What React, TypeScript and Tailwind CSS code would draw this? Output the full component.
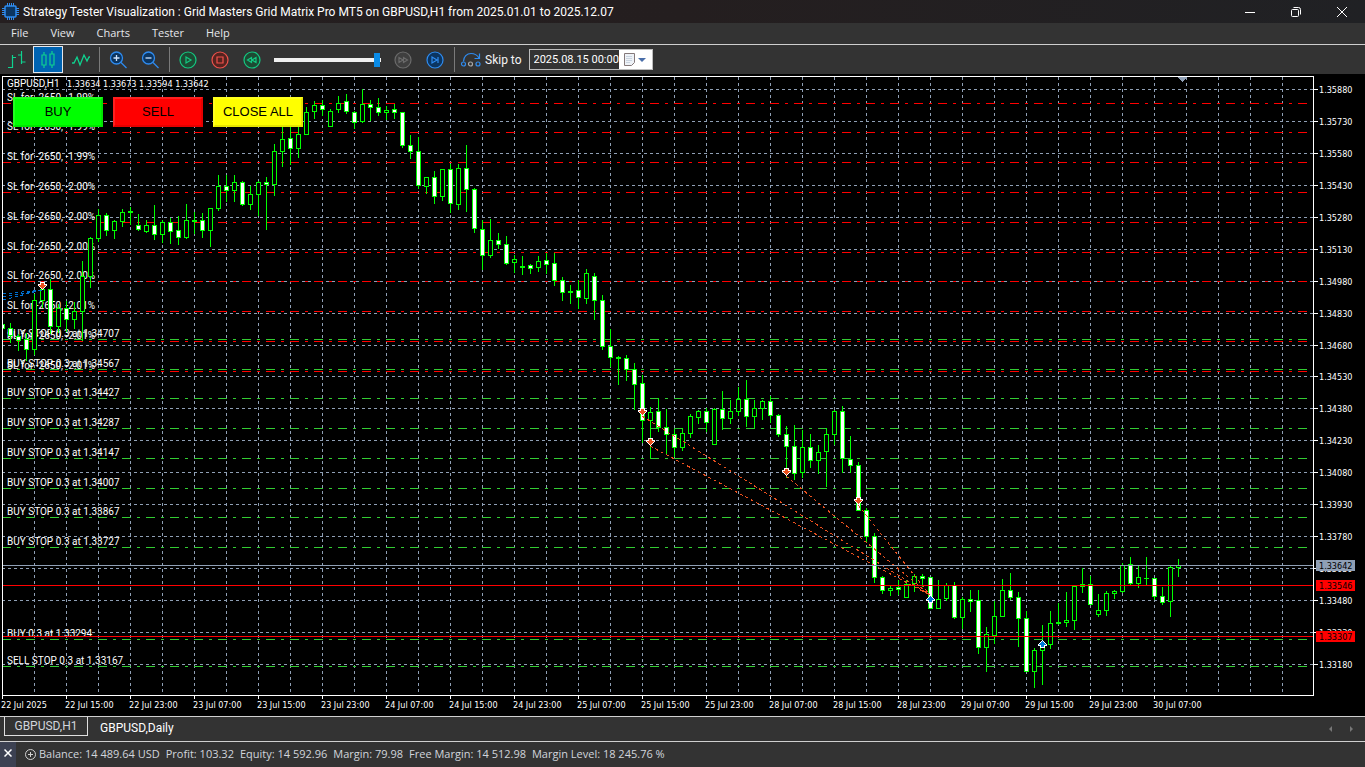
import type { ReactNode } from "react";

// [high, body top, body bottom, low, filled]
type Candle = [number, number, number, number, number];

const candles: Candle[] = [
  [324, 324, 329, 329, 1], [323, 328, 336, 343, 1], [334, 336, 341, 351, 1], [333, 339, 350, 361, 1],
  [294, 300, 350, 355, 0], [287, 289, 301, 308, 0], [279, 289, 327, 334, 1], [304, 308, 327, 333, 0],
  [301, 308, 320, 332, 1], [302, 311, 320, 329, 0], [261, 276, 312, 341, 0], [237, 238, 277, 288, 0],
  [209, 215, 239, 242, 0], [213, 215, 231, 236, 1], [220, 221, 231, 239, 0], [209, 212, 222, 227, 0],
  [207, 211, 213, 225, 0], [214, 225, 230, 231, 1], [220, 225, 232, 233, 0], [205, 225, 235, 240, 1],
  [220, 222, 235, 243, 0], [218, 222, 232, 244, 1], [216, 230, 238, 245, 1], [204, 220, 238, 239, 0],
  [212, 220, 222, 234, 0], [213, 220, 231, 238, 1], [208, 208, 231, 247, 0], [175, 186, 209, 211, 0],
  [175, 186, 191, 202, 1], [175, 182, 191, 202, 0], [181, 182, 205, 206, 1], [186, 194, 205, 210, 0],
  [181, 182, 195, 216, 0], [177, 182, 185, 230, 1], [144, 151, 185, 196, 0], [126, 139, 152, 167, 0],
  [124, 138, 149, 165, 1], [126, 134, 149, 158, 0], [107, 112, 135, 135, 0], [101, 105, 112, 119, 0],
  [100, 105, 110, 116, 1], [109, 111, 127, 127, 0], [96, 103, 110, 113, 0], [94, 101, 112, 114, 1],
  [111, 112, 123, 129, 1], [89, 104, 122, 123, 0], [100, 104, 108, 121, 1], [98, 107, 113, 116, 1],
  [106, 110, 113, 120, 0], [104, 109, 113, 119, 1], [112, 112, 146, 148, 1], [135, 145, 152, 159, 1],
  [137, 151, 186, 189, 1], [177, 177, 187, 194, 0], [171, 177, 197, 204, 1], [169, 169, 197, 201, 0],
  [164, 169, 204, 213, 1], [164, 168, 205, 210, 0], [145, 168, 190, 212, 1], [188, 189, 229, 233, 1],
  [220, 229, 256, 270, 1], [219, 240, 256, 258, 0], [233, 240, 245, 249, 1], [236, 244, 264, 265, 1],
  [255, 259, 263, 273, 0], [256, 266, 268, 275, 0], [264, 265, 269, 274, 1], [256, 261, 268, 272, 0],
  [253, 260, 265, 274, 1], [253, 263, 281, 286, 1], [277, 280, 293, 301, 1], [285, 291, 293, 304, 0],
  [280, 290, 298, 309, 1], [269, 273, 299, 304, 0], [273, 276, 301, 320, 1], [295, 300, 347, 350, 1],
  [329, 346, 358, 367, 1], [356, 357, 359, 385, 0], [355, 358, 370, 381, 1], [363, 369, 385, 410, 1],
  [375, 383, 421, 443, 1], [407, 412, 421, 459, 0], [398, 411, 428, 432, 1], [409, 427, 435, 455, 1],
  [429, 434, 448, 457, 1], [428, 433, 448, 451, 0], [414, 416, 434, 438, 0], [410, 411, 418, 424, 0],
  [408, 411, 423, 432, 1], [408, 409, 445, 445, 0], [391, 409, 419, 430, 1], [400, 411, 419, 424, 0],
  [387, 399, 412, 416, 0], [380, 399, 417, 427, 1], [400, 408, 417, 428, 0], [400, 401, 409, 420, 0],
  [396, 401, 416, 423, 1], [414, 415, 435, 437, 1], [426, 434, 447, 478, 1], [425, 446, 474, 480, 1],
  [430, 447, 473, 478, 0], [434, 447, 461, 468, 1], [445, 452, 461, 474, 0], [428, 434, 452, 487, 0],
  [410, 411, 435, 445, 0], [406, 411, 459, 473, 1], [436, 459, 466, 473, 1], [462, 465, 511, 511, 1],
  [508, 510, 537, 542, 1], [533, 536, 578, 583, 1], [576, 577, 591, 594, 1], [586, 588, 591, 596, 0],
  [580, 587, 590, 595, 1], [580, 584, 598, 598, 0], [574, 576, 584, 592, 0], [574, 576, 579, 587, 1],
  [577, 577, 609, 609, 1], [580, 599, 609, 609, 0], [583, 585, 599, 601, 0], [582, 585, 618, 619, 1],
  [597, 599, 618, 629, 0], [590, 599, 602, 612, 1], [590, 600, 648, 654, 1], [627, 634, 648, 672, 0],
  [601, 616, 636, 644, 0], [579, 590, 617, 617, 0], [573, 590, 598, 600, 1], [592, 597, 619, 647, 1],
  [611, 618, 672, 672, 1], [648, 650, 672, 688, 0], [625, 645, 651, 685, 0], [611, 623, 645, 649, 0],
  [603, 622, 624, 625, 0], [592, 620, 623, 627, 0], [585, 586, 621, 630, 0], [568, 584, 587, 593, 0],
  [576, 584, 605, 605, 1], [594, 610, 615, 617, 0], [591, 593, 611, 616, 0], [590, 591, 594, 599, 0],
  [563, 565, 592, 593, 0], [557, 564, 584, 585, 1], [566, 577, 584, 588, 0], [557, 578, 579, 585, 0],
  [578, 578, 597, 600, 1], [587, 596, 603, 605, 1], [565, 567, 602, 617, 0], [559, 565, 568, 577, 0],
];

const priceTicks = [
  89, 121, 153, 185, 217, 249, 281, 313, 345, 376, 408, 440, 472, 504, 536, 568, 600, 632, 664,
].map((y, i) => ({ y, label: ((135880 - i * 150) / 100000).toFixed(5) }));

const timeLabels = [
  "22 Jul 2025", "22 Jul 15:00", "22 Jul 23:00", "23 Jul 07:00", "23 Jul 15:00", "23 Jul 23:00",
  "24 Jul 07:00", "24 Jul 15:00", "24 Jul 23:00", "25 Jul 07:00", "25 Jul 15:00", "25 Jul 23:00",
  "28 Jul 07:00", "28 Jul 15:00", "28 Jul 23:00", "29 Jul 07:00", "29 Jul 15:00", "29 Jul 23:00",
  "30 Jul 07:00",
];

const stopLosses = [
  { y: 103, text: "SL for -2650, -1.99%" },
  { y: 132, text: "SL for -2650, -1.99%" },
  { y: 162, text: "SL for -2650, -1.99%" },
  { y: 192, text: "SL for -2650, -2.00%" },
  { y: 222, text: "SL for -2650, -2.00%" },
  { y: 252, text: "SL for -2650, -2.00%" },
  { y: 281, text: "SL for -2650, -2.00%" },
  { y: 311, text: "SL for -2650, -2.01%" },
  { y: 341, text: "SL for -2650, -2.01%" },
  { y: 371, text: "SL for -2650, -2.01%" },
];

const orders = [
  { y: 339, text: "BUY STOP 0.3 at 1.34707" },
  { y: 369, text: "BUY STOP 0.3 at 1.34567" },
  { y: 398, text: "BUY STOP 0.3 at 1.34427" },
  { y: 428, text: "BUY STOP 0.3 at 1.34287" },
  { y: 458, text: "BUY STOP 0.3 at 1.34147" },
  { y: 488, text: "BUY STOP 0.3 at 1.34007" },
  { y: 517, text: "BUY STOP 0.3 at 1.33867" },
  { y: 547, text: "BUY STOP 0.3 at 1.33727" },
  { y: 639, text: "BUY 0.3 at 1.33294" },
  { y: 666, text: "SELL STOP 0.3 at 1.33167" },
];

const priceTags = [
  { y: 565, label: "1.33642", color: "#8f9fb5" },
  { y: 585, label: "1.33546", color: "#ff0000" },
  { y: 636, label: "1.33307", color: "#ff0000" },
];

const sells = [[42, 286], [642, 412], [650, 442], [786, 472], [858, 501]];
const buys = [[930, 599], [1042, 644]];
const trades = [[642, 416], [650, 446], [786, 476], [858, 505]];

const Chart = () => (
  <svg
    viewBox="0 74 1365 642"
    className="block w-full h-auto bg-black font-['DejaVu_Sans_Condensed','DejaVu_Sans',sans-serif] text-[9px]"
    role="img"
    aria-label="GBPUSD,H1"
  >
    <g shapeRendering="crispEdges">
      {/* grid */}
      <g stroke="#8f9fb5" strokeDasharray="3 3">
        {Array.from({ length: 40 }, (_, i) => (
          <line key={i} x1={34.5 + i * 32} x2={34.5 + i * 32} y1="77" y2="695" />
        ))}
        {priceTicks.map(({ y }) => (
          <line key={y} x1="2" x2="1313" y1={y + 0.5} y2={y + 0.5} />
        ))}
      </g>
      <g strokeDasharray="9 6 3 6">
        {stopLosses.map(({ y }) => (
          <line key={y} x1="2" x2="1313" y1={y + 0.5} y2={y + 0.5} stroke="#ff0000" />
        ))}
        {orders.map(({ y }) => (
          <line key={y} x1="2" x2="1313" y1={y + 0.5} y2={y + 0.5} stroke="#32cd32" />
        ))}
      </g>
    </g>

    <text x="67" y="87" fill="#fff">1.33634 1.33673 1.33594 1.33642</text>
    <g fill="#fff" className="font-[Roboto,sans-serif] text-[10px]">
      <text x="7" y="87">GBPUSD,H1</text>
      {[...stopLosses, ...orders].map(({ y, text }) => (
        <text key={y} x="7" y={y - 2}>{text}</text>
      ))}
    </g>

    <g shapeRendering="crispEdges">
      {candles.map(([high, top, bottom, low, filled], i) => {
        const x = 2 + i * 8;
        return (
          <g key={x}>
            <rect x={x} y={high} width="1" height={low - high} fill="#00ff00" />
            <rect x={x - 2} y={top} width="5" height={bottom - top} fill="#00ff00" />
            {bottom - top > 2 && (
              <rect x={x - 1} y={top + 1} width="3" height={bottom - top - 2} fill={filled ? "#fff" : "#000"} />
            )}
          </g>
        );
      })}

      {/* closed trades */}
      <g strokeDasharray="3 3" fill="none">
        {trades.map(([x, y]) => (
          <line key={x} x1={x} y1={y} x2="930" y2="595" stroke="#e9501e" />
        ))}
        <line x1="3" y1="294" x2="42" y2="290" stroke="#0070d0" />
        <line x1="3" y1="297" x2="42" y2="290" stroke="#0070d0" />
        <line x1="3" y1="300" x2="42" y2="290" stroke="#0070d0" />
      </g>
      {sells.map(([x, y]) => (
        <g key={x} transform={`translate(${x} ${y})`}>
          <path d="M-2 -4h5v2h2v2h-1v1h-1v1h-1v1h-1v1h-1v-1h-1v-1h-1v-1h-1v-1h-1v-2h2z" fill="#fff" />
          <path d="M-1 -3h3v2h2v1h-1v1h-1v1h-1v1h-1v-1h-1v-1h-1v-1h-1v-1h2z" fill="#e9501e" />
        </g>
      ))}
      {buys.map(([x, y]) => (
        <g key={x} transform={`translate(${x} ${y})`}>
          <path d="M0 -4h1v1h1v1h1v1h1v1h1v2h-2v2h-5v-2h-2v-2h1v-1h1v-1h1v-1h1z" fill="#fff" />
          <path d="M0 -3h1v1h1v1h1v1h1v1h-2v2h-3v-2h-2v-1h1v-1h1v-1h1z" fill="#0078d7" />
        </g>
      ))}

      <rect x="2" y="565" width="1311" height="1" fill="#8f9fb5" />
      <rect x="2" y="585" width="1311" height="1" fill="#ff0000" />
      <rect x="2" y="636" width="1311" height="1" fill="#ff0000" />

      <rect x="0" y="76" width="2" height="620" fill="#000" />
      <path d="M2.5 76.5H1313.5V695.5H2.5z" fill="none" stroke="#fff" />
      <path d="M1178 77h9l-4.500 5z" fill="#8f9fb5" />
    </g>

    <g fill="#fff">
      {priceTicks.map(({ y, label }) => (
        <g key={y}>
          <rect x="1314" y={y} width="4" height="1" />
          <text x="1319" y={y + 4}>{label}</text>
        </g>
      ))}
      {timeLabels.map((label, i) => (
        <g key={label}>
          <rect x={2 + i * 64} y="696" width="1" height="3" />
          <text x={1 + i * 64} y="708">{label}</text>
        </g>
      ))}
    </g>
    {priceTags.map(({ y, label, color }) => (
      <g key={y}>
        <rect x="1316" y={y - 5} width="39" height="11" fill={color} />
        <text x="1319" y={y + 4} fill="#000">{label}</text>
      </g>
    ))}
  </svg>
);

const ToolButton = ({ label, active, children }: { label: string; active?: boolean; children: ReactNode }) => (
  <button
    aria-label={label}
    className={
      active
        ? "flex h-[27px] w-[30px] items-center justify-center border border-gray-200 bg-[#0063b1]"
        : "flex h-[27px] w-8 items-center justify-center"
    }
  >
    {children}
  </button>
);

const RoundIcon = ({ stroke, fill, children }: { stroke: string; fill: string; children: ReactNode }) => (
  <svg width="18" height="18" viewBox="0 0 18 18" stroke={stroke} fill="none" strokeWidth="1.2">
    <circle cx="9" cy="9" r="8" fill={fill} />
    {children}
  </svg>
);

const ZoomIcon = ({ plus }: { plus?: boolean }) => (
  <svg width="18" height="18" viewBox="0 0 18 18" fill="none" stroke="#2f8cf0" strokeWidth="1.300">
    <circle cx="7.500" cy="7" r="6" fill="#0b3561" />
    <path d="M12 11.500l5.500 5.500" />
    <path d={plus ? "M4.500 7h6M7.500 4v6" : "M4.500 7h6"} stroke="#cfe4ff" />
  </svg>
);

const Separator = () => <div className="h-[25px] w-px bg-[#7a7a7a]" />;

const Toolbar = () => (
  <div className="flex h-[29px] items-center bg-[#333333] pl-px text-gray-100">
    <ToolButton label="Bars">
      <svg width="18" height="18" viewBox="0 0 18 18" fill="none" stroke="#0fd28f" strokeWidth="1.200">
        <path d="M4.500 4v13M0 16.500h4.500M4.500 6.500h3.500M13.500 0v13M10 4h3.500M13.500 11h4" />
      </svg>
    </ToolButton>
    <ToolButton label="Candles" active>
      <svg width="16" height="18" viewBox="0 0 16 18" fill="none" stroke="#0fd28f" strokeWidth="1.200">
        <path d="M4 1v3M4 14v3M12 0v3M12 14v3M2 4h4v10H2zM10 3h4v11h-4z" />
      </svg>
    </ToolButton>
    <div className="mx-[2px]">
      <ToolButton label="Line">
        <svg width="18" height="14" viewBox="0 0 18 14" fill="none" stroke="#0fd28f" strokeWidth="1.300">
          <path d="M0 10h2l3-6 3 8 4-10 3 6 2-4h1" />
        </svg>
      </ToolButton>
    </div>
    <Separator />
    <div className="ml-[2px] mr-[3px] flex">
      <ToolButton label="Zoom in"><ZoomIcon plus /></ToolButton>
      <ToolButton label="Zoom out"><ZoomIcon /></ToolButton>
    </div>
    <Separator />
    <div className="ml-[2px] flex">
      <ToolButton label="Play">
        <RoundIcon stroke="#14c982" fill="#1d4a33"><path d="M7 6l5 3-5 3z" /></RoundIcon>
      </ToolButton>
      <ToolButton label="Stop">
        <RoundIcon stroke="#f0524c" fill="#54231f"><path d="M6 6h6v6H6z" /></RoundIcon>
      </ToolButton>
      <ToolButton label="Slower">
        <RoundIcon stroke="#14c982" fill="#1d4a33"><path d="M8.500 6.500v5L4.500 9zM13 6.500v5L9 9z" /></RoundIcon>
      </ToolButton>
    </div>
    <input
      type="range"
      aria-label="Speed"
      min="0"
      max="100"
      defaultValue="99"
      className="mx-[6px] h-[14px] w-[107px] appearance-none bg-transparent [&::-webkit-slider-runnable-track]:h-1 [&::-webkit-slider-runnable-track]:bg-[#f0f0f0] [&::-webkit-slider-thumb]:-mt-[5px] [&::-webkit-slider-thumb]:h-[14px] [&::-webkit-slider-thumb]:w-[6px] [&::-webkit-slider-thumb]:appearance-none [&::-webkit-slider-thumb]:bg-[#0a8be6]"
    />
    <div className="mr-[3px] flex">
      <ToolButton label="Faster">
        <RoundIcon stroke="#6b6b6b" fill="#3f3f3f"><path d="M5 6.500v5L9 9zM9.500 6.500v5l4-2.500z" /></RoundIcon>
      </ToolButton>
      <ToolButton label="Step">
        <RoundIcon stroke="#2f8cf0" fill="#0b3561"><path d="M6 6v6l5-3zM12 6v6" /></RoundIcon>
      </ToolButton>
    </div>
    <Separator />
    <button className="ml-[6px] flex items-center gap-1">
      <svg width="20" height="15" viewBox="0 0 20 15" fill="none" stroke="#2f8cf0" strokeWidth="1.200">
        <path d="M2.500 9.500C2.500 4.500 6 1.500 10 1.500c3.500 0 6.500 2 8 4.500M18.500 1.500V6.500H13.500" />
        <circle cx="2.500" cy="12" r="2" />
        <circle cx="9.500" cy="12" r="2" stroke="#a8a8a8" />
        <circle cx="17" cy="12" r="2" />
      </svg>
      Skip to
    </button>
    <div className="ml-[7px] flex h-[21px] w-[124px] border border-[#bdbdbd]">
      <input
        aria-label="Skip to"
        defaultValue="2025.08.15 00:00"
        className="w-0 flex-1 bg-[#333333] pl-1 pt-[2px] text-[11px] text-white outline-none"
      />
      <button aria-label="Choose date" className="flex w-[33px] items-center justify-center gap-[3px] bg-white">
        <svg width="11" height="13" viewBox="0 0 11 13" fill="none">
          <path d="M.5 .5h10v9l-3 3h-7z" fill="#eef2f7" stroke="#84797a" />
          <path d="M2.500 3.500h6M2.500 5.500h6M2.500 7.500h6M2.500 9.500h4" stroke="#a7b7c8" strokeDasharray="1 1" />
        </svg>
        <svg width="8" height="4" viewBox="0 0 8 4"><path d="M0 0h8L4 4z" fill="#4a6ea9" /></svg>
      </button>
    </div>
  </div>
);

const ExpertPanel = () => (
  <div className="absolute left-[13px] top-[23px] flex gap-[10px] font-['Liberation_Sans',Arial,sans-serif] text-[13px] text-black">
    <button className="h-[30px] w-[90px] border-2 border-b-[#00e600] border-l-[#20ff20] border-r-[#00e600] border-t-[#20ff20] bg-[#00ff00]">BUY</button>
    <button className="h-[30px] w-[90px] border-2 border-b-[#e60000] border-l-[#ff2020] border-r-[#e60000] border-t-[#ff2020] bg-[#ff0000]">SELL</button>
    <button className="h-[30px] w-[90px] whitespace-nowrap border-2 border-b-[#e6e600] border-l-[#ffff20] border-r-[#e6e600] border-t-[#ffff20] bg-[#ffff00]">CLOSE ALL</button>
  </div>
);

const App = () => {
  return (
    <div className="flex min-h-screen flex-col bg-[#333333] font-[Roboto,'Open_Sans',sans-serif] text-[12px] text-gray-200">
      <header className="flex h-[23px] items-center bg-linear-to-r from-[#251f20] via-[#241e1f] to-[#202124] pl-[2px] text-white">
        <svg width="17" height="17" viewBox="0 0 17 17" fill="none" stroke="#2f8cf0">
          <rect x="3" y="3" width="11" height="11" rx="1" fill="#0b3561" strokeWidth="1.500" />
          <path d="M5.500 0v3M7.500 0v3M9.500 0v3M11.500 0v3M5.500 14v3M7.500 14v3M9.500 14v3M11.500 14v3M0 5.500h3M0 7.500h3M0 9.500h3M0 11.500h3M14 5.500h3M14 7.500h3M14 9.500h3M14 11.500h3" />
        </svg>
        <h1 className="ml-1 flex-1 whitespace-nowrap">
          Strategy Tester Visualization : Grid Masters Grid Matrix Pro MT5 on GBPUSD,H1 from 2025.01.01 to 2025.12.07
        </h1>
        <div className="flex">
          <button aria-label="Minimize" className="flex h-[20px] w-[46px] items-center justify-center">
            <svg width="10" height="10" viewBox="0 0 10 10" stroke="#fff"><path d="M0 5.500h10" /></svg>
          </button>
          <button aria-label="Restore" className="flex h-[20px] w-[46px] items-center justify-center">
            <svg width="10" height="10" viewBox="0 0 10 10" fill="none" stroke="#fff">
              <rect x=".5" y="2.500" width="7" height="7" rx="1" />
              <path d="M2.500 .5h5a2 2 0 0 1 2 2v5" />
            </svg>
          </button>
          <button aria-label="Close" className="flex h-[20px] w-[46px] items-center justify-center">
            <svg width="10" height="10" viewBox="0 0 10 10" stroke="#fff"><path d="M0 0l10 10M10 0L0 10" /></svg>
          </button>
        </div>
      </header>

      <nav className="flex h-[22px] items-center gap-[22px] border-b border-[#cfcfcf] pl-[11px] font-['Open_Sans','Noto_Sans',sans-serif] text-[11px]">
        <button>File</button>
        <button>View</button>
        <button>Charts</button>
        <button>Tester</button>
        <button>Help</button>
      </nav>

      <Toolbar />

      <main className="relative">
        <Chart />
        <ExpertPanel />
      </main>

      <div className="flex h-[25px] items-center justify-between border-t border-[#d0d0d0]">
        <div className="flex h-full items-start">
          <button className="ml-1 h-[19px] w-[84px] border-x border-b border-[#e0e0e0] text-gray-300">GBPUSD,H1</button>
          <button className="ml-3 h-[21px] text-white">GBPUSD,Daily</button>
        </div>
        <div className="mr-3 flex gap-[18px]">
          <button aria-label="Scroll left">
            <svg width="3" height="6" viewBox="0 0 3 6"><path d="M3 0v6L0 3z" fill="#777" /></svg>
          </button>
          <button aria-label="Scroll right">
            <svg width="3" height="6" viewBox="0 0 3 6"><path d="M0 0v6l3-3z" fill="#777" /></svg>
          </button>
        </div>
      </div>

      <footer className="flex min-h-[26px] flex-1 items-stretch border-t border-[#d0d0d0] text-gray-300">
        <button aria-label="Close panel" className="flex w-4 items-start justify-center bg-[#3c4152] pt-[7px]">
          <svg width="8" height="8" viewBox="0 0 8 8" stroke="#fff" strokeWidth="1.500"><path d="M.5 .5l7 7M7.500 .5l-7 7" /></svg>
        </button>
        <div className="flex items-center pl-[9px]">
          <svg className="mr-[3px]" width="11" height="11" viewBox="0 0 11 11" fill="none" stroke="#d0d0d0">
            <circle cx="5.500" cy="5.500" r="5" />
            <path d="M3 5.500h5M5.500 3v5" />
          </svg>
          <p className="flex gap-[6px] whitespace-nowrap font-['Open_Sans','Noto_Sans',sans-serif] text-[11px]">
            <span>Balance: 14 489.64 USD</span>
            <span>Profit: 103.32</span>
            <span>Equity: 14 592.96</span>
            <span>Margin: 79.98</span>
            <span>Free Margin: 14 512.98</span>
            <span>Margin Level: 18 245.76 %</span>
          </p>
        </div>
      </footer>
    </div>
  );
};

export default App;
